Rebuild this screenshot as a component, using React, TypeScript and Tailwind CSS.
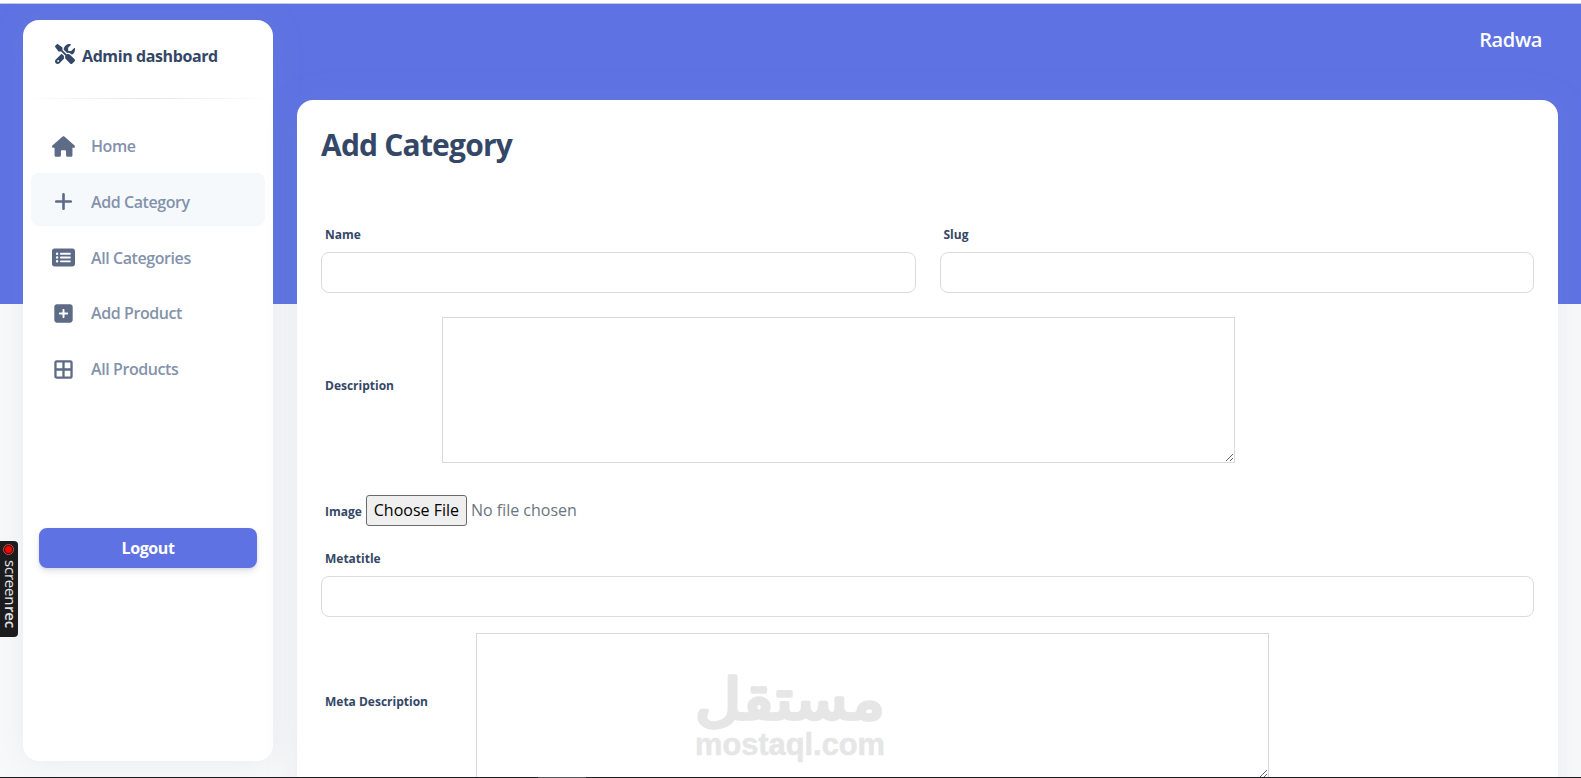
import type { ReactNode } from 'react';
import { FaHouse, FaPlus, FaRectangleList, FaScrewdriverWrench, FaSquarePlus } from 'react-icons/fa6';

function GridIcon({ className }: { className?: string }) {
  return (
    <svg viewBox="0 0 448 512" className={className} fill="none" stroke="currentColor" strokeWidth="56">
      <rect x="28" y="60" width="392" height="392" rx="28" />
      <path d="M224 60v392M28 256h392" />
    </svg>
  );
}

const navItems = [
  { label: 'Home', icon: FaHouse },
  { label: 'Add Category', icon: FaPlus, active: true },
  { label: 'All Categories', icon: FaRectangleList },
  { label: 'Add Product', icon: FaSquarePlus },
  { label: 'All Products', icon: GridIcon },
];

function Sidebar() {
  return (
    <aside className="ml-[23px] mt-4 h-[741px] w-[250px] shrink-0 rounded-2xl bg-white shadow-[0_0_32px_0_rgba(136,152,170,0.15)]">
      <div className="flex h-[78px] items-start gap-[7px] pl-8 pt-6 text-[#344767]">
        <FaScrewdriverWrench className="h-5 w-5" />
        <span className="text-base font-bold leading-6 tracking-[-0.4px]">Admin dashboard</span>
      </div>
      <hr className="h-px border-0 bg-gradient-to-r from-transparent via-[#e4e6e9] to-transparent" />

      <nav className="mt-[18px] flex flex-col gap-[2.8px] px-2">
        {navItems.map(({ label, icon: Icon, active }) => (
          <a
            key={label}
            href="#"
            className={`flex h-[53px] items-center rounded-lg pl-5 pt-[5px] ${active ? 'bg-[#f6f9fc]' : ''}`}
          >
            <span className="flex w-6 justify-center text-[#5d6b86]">
              <Icon className="h-[21px] w-[23px] shrink-0" />
            </span>
            <span className="ml-4 text-base font-semibold tracking-[-0.42px] text-[#8392ab]">{label}</span>
          </a>
        ))}
      </nav>

      <button className="mx-4 mt-[135px] h-10 w-[218px] rounded-lg bg-[#5e72e4] text-base font-bold tracking-[-0.4px] text-white shadow-[0_4px_6px_rgba(50,50,93,0.11),0_1px_3px_rgba(0,0,0,0.08)]">
        Logout
      </button>
    </aside>
  );
}

function Label({ children, className = '' }: { children: ReactNode; className?: string }) {
  return <label className={`ml-1 text-xs font-bold leading-5 text-[#344767] ${className}`}>{children}</label>;
}

function TextField({ label }: { label: string }) {
  return (
    <div className="flex flex-1 flex-col gap-[7px]">
      <Label>{label}</Label>
      <input type="text" className="h-[41px] w-full rounded-lg border border-[#d9dbde] bg-white px-3" />
    </div>
  );
}

function TextArea({ label }: { label: string }) {
  return (
    <div className="flex items-center gap-12">
      <Label className="mb-2">{label}</Label>
      <textarea className="block h-[146px] w-[793px] resize border border-[#d7d9dc] bg-white" />
    </div>
  );
}

function RecorderTab() {
  return (
    <div className="absolute left-0 top-[541px] flex h-24 w-[18px] flex-col items-center rounded-r bg-[#1c1c1e] pt-[3px]">
      <span className="-ml-px flex h-[11px] w-[11px] shrink-0 items-center justify-center rounded-full border border-[#d8453c]">
        <span className="h-[7px] w-[7px] rounded-full bg-[#ff0000]" />
      </span>
      <span className="ml-[3px] mt-[5px] whitespace-nowrap text-[15px] leading-[18px] tracking-[-0.2px] text-[#e4e4e4] [writing-mode:vertical-rl]">
        screen<span className="mt-px font-semibold">rec</span>
      </span>
    </div>
  );
}

function Watermark() {
  return (
    <svg
      className="pointer-events-none absolute left-[690px] top-[665px] h-[100px] w-[200px] overflow-visible"
      viewBox="0 0 200 100"
      fill="#e6e6e6"
      stroke="#e6e6e6"
      strokeLinejoin="round"
      strokeLinecap="round"
    >
      <text
        x="100"
        y="54"
        textAnchor="middle"
        direction="rtl"
        fontSize="56"
        strokeWidth="3.6"
        textLength="190"
        lengthAdjust="spacingAndGlyphs"
        fontFamily="'DejaVu Sans', sans-serif"
      >
        مستقل
      </text>
      <text
        x="5"
        y="90"
        fontSize="31"
        fontWeight="700"
        strokeWidth="0.5"
        textLength="190"
        lengthAdjust="spacingAndGlyphs"
        fontFamily="'Liberation Sans', sans-serif"
      >
        mostaql.com
      </text>
    </svg>
  );
}

export default function App() {
  return (
    <div className="relative flex h-[778px] w-[1581px] flex-col overflow-hidden bg-[#f8f9fa] font-['Open_Sans',sans-serif]">
      <div className="h-1 shrink-0 border-b border-[#c3c9ee] bg-white" />

      <div className="flex h-[773px] shrink-0 items-start overflow-hidden bg-[linear-gradient(#5e72e4_300px,#f8f9fa_300px)]">
        <Sidebar />

        <main className="ml-6 mr-[23px] flex-1">
          <header className="flex h-24 justify-end pr-4 pt-[21px]">
            <span className="text-xl font-semibold leading-[30px] tracking-[-0.4px] text-white">Radwa</span>
          </header>

          <section className="h-[760px] rounded-2xl bg-white px-6 pt-[25px] shadow-[0_0_32px_0_rgba(136,152,170,0.15)]">
            <h1 className="text-[30px] font-bold leading-10 tracking-[-0.8px] text-[#344767]">Add Category</h1>

            <form>
              <div className="mt-[60px] flex gap-6">
                <TextField label="Name" />
                <TextField label="Slug" />
              </div>
              <div className="mt-6">
                <TextArea label="Description" />
              </div>
              <div className="mt-8 flex h-[31px] items-center gap-1">
                <Label className="mt-[2px]">Image</Label>
                <input
                  type="file"
                  className="h-[31px] text-base font-normal leading-[22px] text-[#6c757d] file:mr-1 file:h-[31px] file:w-[101px] file:rounded-[3px] file:border file:border-solid file:border-[#6b6b6b] file:bg-[#efefef] file:p-0 file:pb-[2px] file:text-base file:text-black"
                />
              </div>
              <div className="mt-[23px] flex">
                <TextField label="Metatitle" />
              </div>
              <div className="mt-4">
                <TextArea label="Meta Description" />
              </div>
            </form>
          </section>
        </main>
      </div>

      <div className="flex h-px shrink-0 bg-[#1c1c1e]">
        <span className="ml-[538px] h-px w-12 bg-[#55565a]" />
      </div>

      <RecorderTab />
      <Watermark />
    </div>
  );
}
